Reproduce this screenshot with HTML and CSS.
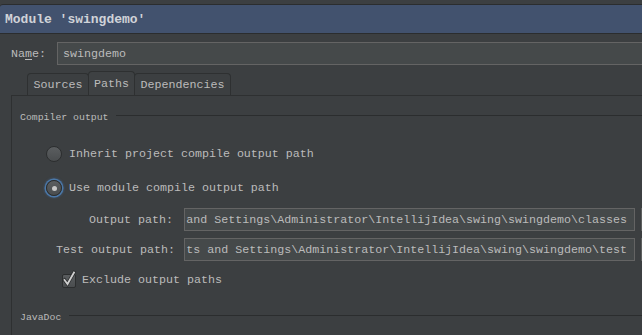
FILE: index.html
```html
<!DOCTYPE html>
<html>
<head>
<meta charset="utf-8">
<link rel="stylesheet" href="styles.css">
</head>
<body>
<div class="window">
  <div class="titlebar"><span class="title">Module 'swingdemo'</span></div>
  <div class="name-row">
    <span class="name-label">Na<u>m</u>e:</span>
    <div class="field name-field">swingdemo</div>
  </div>
  <div class="tabs">
    <div class="tab tab-sources">Sources</div>
    <div class="tab tab-active">Paths</div>
    <div class="tab tab-deps">Dependencies</div>
  </div>
  <div class="panel">
    <div class="group-title"><span>Compiler output</span><span class="rule"></span></div>
    <div class="group-body">
      <div class="radio-row first">
        <span class="radio"></span>
        <span class="label">Inherit project compile output path</span>
      </div>
      <div class="radio-row">
        <span class="radio radio-on"><span class="dot"></span></span>
        <span class="label">Use module compile output path</span>
      </div>
      <div class="paths">
        <span class="path-label">Output path:</span>
        <div class="field path-field"><span class="path-text">and Settings\Administrator\IntellijIdea\swing\swingdemo\classes</span></div>
        <div class="browse"></div>
        <span class="path-label">Test output path:</span>
        <div class="field path-field"><span class="path-text">ts and Settings\Administrator\IntellijIdea\swing\swingdemo\test</span></div>
        <div class="browse"></div>
      </div>
      <div class="check-row">
        <span class="checkbox">
          <svg class="check" width="16" height="18" viewBox="0 0 16 18"><path d="M3.5 10 L6.5 14 L13 2.5" fill="none" stroke="#2a2c2d" stroke-width="3.4" stroke-linecap="square"/><path d="M3.5 10 L6.5 14 L13 2.5" fill="none" stroke="#cfcfcf" stroke-width="1.8" stroke-linecap="square"/></svg>
        </span>
        <span class="label">Exclude output paths</span>
      </div>
    </div>
    <div class="group-title javadoc"><span>JavaDoc</span><span class="rule"></span></div>
  </div>
</div>
</body>
</html>
```
FILE: styles.css
```css
html, body {
  margin: 0;
  padding: 0;
  background: #3c3f41;
  overflow: hidden;
}
body {
  width: 642px;
  height: 335px;
  font-family: "Liberation Mono", "DejaVu Sans Mono", monospace;
  font-size: 11.67px;
  color: #bbbbbb;
}
.window {
  padding-top: 4px;
  height: 335px;
  box-sizing: border-box;
  display: flex;
  flex-direction: column;
}
.titlebar {
  border-top: 1px solid #2b2d2e;
  border-bottom: 1px solid #2b2d2e;
  background: #42526e;
  height: 28px;
  flex-shrink: 0;
  border-top-left-radius: 3px;
  display: flex;
  align-items: center;
  padding-left: 5px;
}
.title {
  font-weight: bold;
  font-size: 13px;
  color: #d0d3d8;
}
.name-row {
  display: flex;
  align-items: center;
  margin-top: 8px;
  padding-left: 11px;
}
.name-label {
  width: 46px;
}
.name-label u {
  text-underline-offset: 2px;
}
.field {
  background: #45494a;
  border: 1px solid #646464;
  box-sizing: border-box;
  height: 23px;
  display: flex;
  align-items: center;
  white-space: nowrap;
}
.name-field {
  flex: 1;
  padding-left: 5px;
  border-right: none;
}
.tabs {
  display: flex;
  align-items: flex-end;
  margin-top: 6px;
  margin-left: 27px;
  height: 24px;
  flex-shrink: 0;
}
.tab {
  height: 22px;
  box-sizing: border-box;
  border: 1px solid #2e3031;
  border-bottom: none;
  border-radius: 4px 4px 0 0;
  display: flex;
  align-items: center;
  justify-content: center;
  background: #3c3f41;
}
.tab + .tab {
  margin-left: -1px;
}
.tab-sources {
  width: 62px;
}
.tab-active {
  width: 47px;
  height: 24px;
  background: #3e4143;
}
.tab-deps {
  width: 97px;
}
.panel {
  flex: 1;
  margin-left: 11px;
  border-top: 1px solid #2e3031;
  border-left: 1px solid #2e3031;
  padding: 15px 0 0 8px;
}
.group-title {
  display: flex;
  align-items: center;
  font-size: 9.83px;
  height: 12px;
}
.rule {
  flex: 1;
  height: 1px;
  background: #2b2d2e;
  margin-left: 8px;
  margin-top: -4px;
}
.group-body {
  padding-left: 26px;
}
.radio-row {
  display: flex;
  align-items: center;
  height: 20px;
  margin-top: 14px;
}
.radio-row.first {
  margin-top: 21px;
}
.radio {
  width: 16px;
  height: 16px;
  box-sizing: border-box;
  border-radius: 50%;
  border: 1px solid #2c2e2f;
  background: linear-gradient(#5b5e60, #4a4d4f);
  margin-right: 7px;
  display: flex;
  align-items: center;
  justify-content: center;
}
.radio-on {
  border: 1px solid #2c2e2f;
  box-shadow: 0 0 0 1.5px #4b78a8, 0 0 2px 2px rgba(70, 110, 160, 0.5);
}
.dot {
  width: 5px;
  height: 5px;
  border-radius: 50%;
  background: #c8c8c8;
}
.paths {
  display: grid;
  grid-template-columns: 117px 451px 1px;
  column-gap: 11px;
  row-gap: 7px;
  margin-top: 10px;
  margin-left: 10px;
  align-items: center;
}
.path-label {
  text-align: right;
  white-space: nowrap;
}
.path-field {
  justify-content: flex-end;
  overflow: hidden;
  padding-right: 7px;
}
.path-text {
  flex-shrink: 0;
}
.browse {
  height: 23px;
  margin-left: -5px;
  background: #5e6060;
}
.check-row {
  display: flex;
  align-items: center;
  height: 18px;
  margin-top: 10px;
  margin-left: 16px;
}
.checkbox {
  position: relative;
  width: 14px;
  height: 14px;
  box-sizing: border-box;
  border: 1px solid #2c2e2f;
  background: linear-gradient(#5a5d5f, #4a4d4f);
  border-radius: 2px;
  margin-right: 6px;
  margin-top: 2px;
}
.check {
  position: absolute;
  left: -2px;
  top: -5px;
}
.javadoc {
  margin-top: 22px;
}
```
